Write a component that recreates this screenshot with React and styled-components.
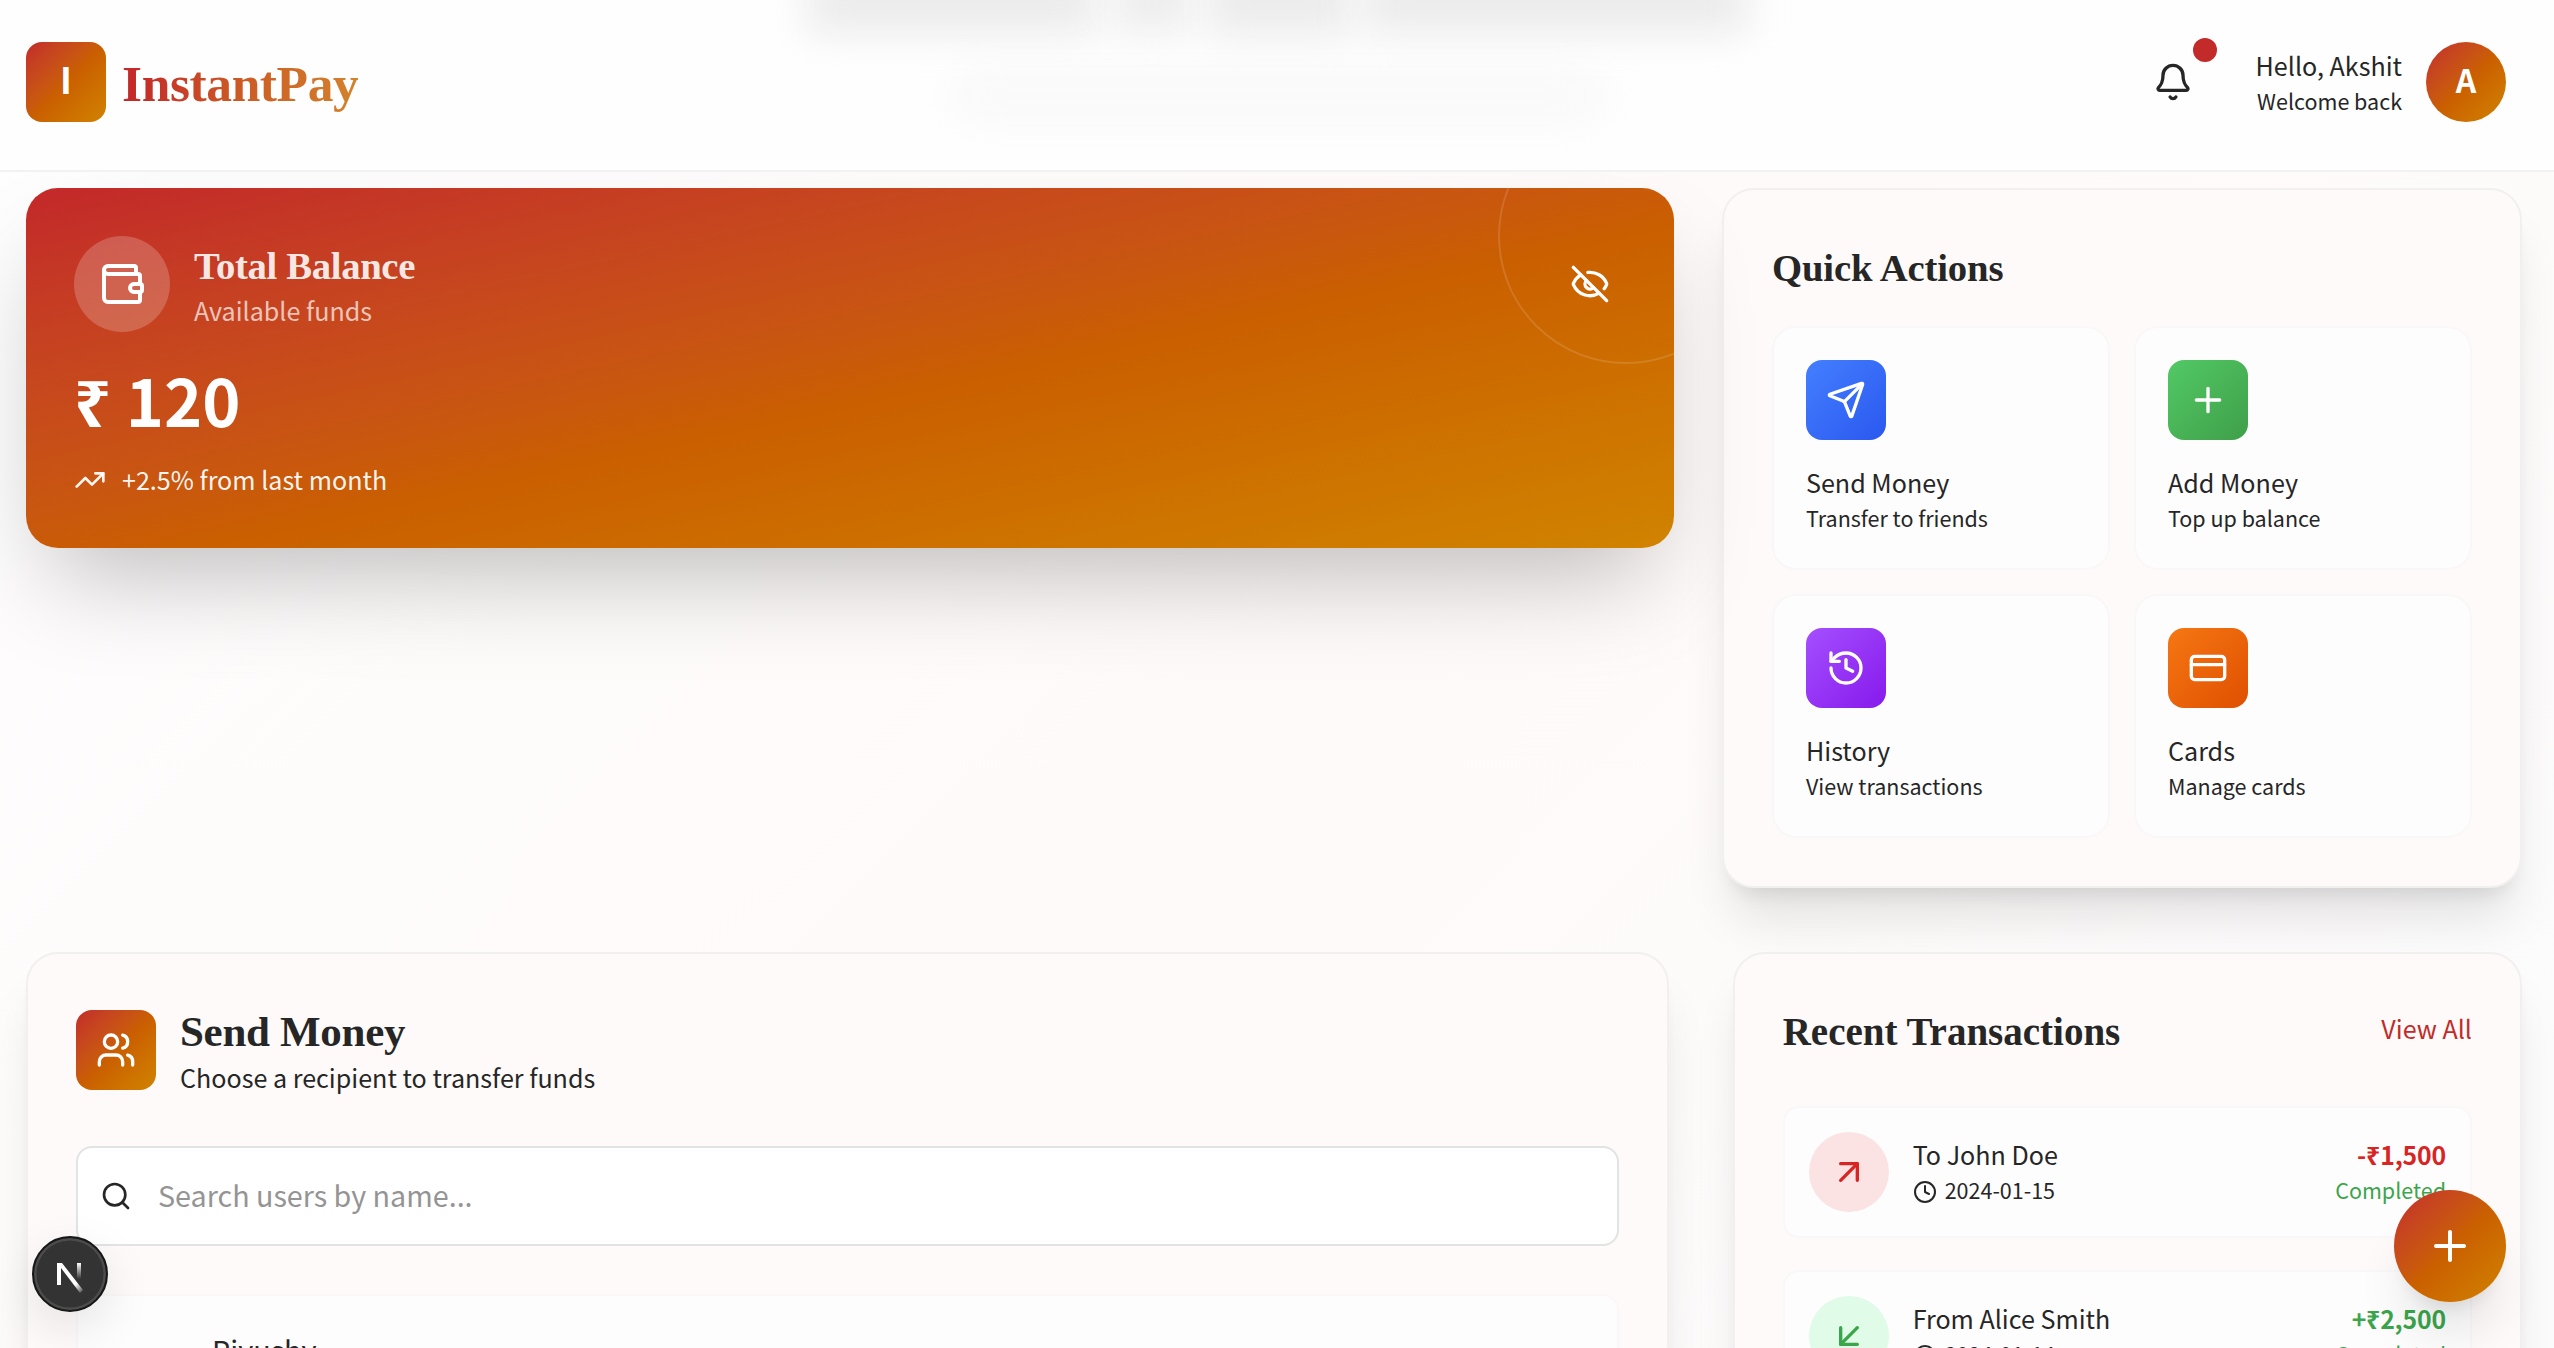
import React from 'react';
import styled, { createGlobalStyle } from 'styled-components';
import {
  ArrowDownLeft,
  ArrowUpRight,
  Bell,
  Clock,
  CreditCard,
  EyeOff,
  History,
  Plus,
  Search,
  Send,
  TrendingUp,
  Users,
  Wallet,
} from 'lucide-react';

const sans = '"Noto Sans CJK SC", "Noto Sans", sans-serif';
const serif = '"Liberation Serif", serif';
const brand = 'linear-gradient(to bottom right in oklab, #c32a29 0%, #ca5f00 51%, #d08300 100%)';
const brandWide = 'linear-gradient(to bottom right in oklab, #c32a29 2%, #ca5f00 55%, #d08300 100%)';
const ink = '#262626';
const shadowXl = '0 40px 50px -10px rgba(0, 0, 0, 0.1), 0 16px 20px -12px rgba(0, 0, 0, 0.1)';

const GlobalStyle = createGlobalStyle`
  *, *::before, *::after { box-sizing: border-box; }
  html, body { margin: 0; padding: 0; overflow: hidden; }
  body { font-family: ${sans}; color: ${ink}; }
  h1, h2, h3, p { margin: 0; font-weight: 400; }
  button { border: 0; background: none; padding: 0; color: inherit; font: inherit; }
  svg { display: block; flex: none; }
`;

const Page = styled.div`
  display: flex;
  flex-direction: column;
  height: 1348px;
  overflow: hidden;
  background: linear-gradient(135deg, #fefefe 0%, #fefaf9 50%, #fcfcfc 100%);
`;

const Header = styled.header`
  position: relative;
  z-index: 2;
  flex: none;
  display: flex;
  justify-content: space-between;
  align-items: center;
  height: 172px;
  padding: 0 48px 6px 26px;
  overflow: hidden;
  background: #fefefe;
  border-bottom: 2px solid #f2f2f2;
`;

const Haze = styled.span`
  position: absolute;
  left: ${(p) => p.$x}px;
  top: ${(p) => p.$y}px;
  width: ${(p) => p.$w}px;
  height: ${(p) => p.$h}px;
  border-radius: 12px;
  background: ${(p) => p.$tone};
  filter: blur(${(p) => p.$blur}px);
`;

const Brand = styled.div`
  position: relative;
  display: flex;
  align-items: center;
  gap: 16px;
`;

const BrandMark = styled.div`
  display: flex;
  align-items: center;
  justify-content: center;
  width: 80px;
  height: 80px;
  padding-bottom: 8px;
  border-radius: 16px;
  background: ${brand};
  color: #fff;
  font-size: 36px;
  font-weight: 700;
  line-height: 1;
`;

const BrandName = styled.h1`
  padding-top: 4px;
  font-family: ${serif};
  font-size: 51.5px;
  font-weight: 700;
  line-height: 64px;
  letter-spacing: -0.4px;
  background: linear-gradient(to right, #c32a29 5%, #cc5a24 50%, #d3832c 100%);
  background-clip: text;
  -webkit-background-clip: text;
  color: transparent;
`;

const Account = styled.div`
  position: relative;
  display: flex;
  align-items: center;
`;

const BellButton = styled.button`
  position: relative;
  padding: 16px;
  margin-right: 47px;
`;

const Dot = styled.span`
  position: absolute;
  top: -8px;
  right: -8px;
  width: 24px;
  height: 24px;
  border-radius: 50%;
  background: #c22b29;
`;

const Greeting = styled.div`
  padding-bottom: 3px;
  margin-right: 24px;
  text-align: right;
`;

const Avatar = styled(BrandMark)`
  border-radius: 50%;
  padding-bottom: 6px;
  font-size: 32px;
`;

const Label = styled.p`
  font-size: 25.1px;
  line-height: ${(p) => p.$lh || 40}px;
  color: ${(p) => p.$color || ink};
  white-space: nowrap;
`;

const Small = styled.p`
  font-size: 21.5px;
  line-height: 32px;
  color: ${(p) => p.$color || ink};
  white-space: nowrap;
`;

const Main = styled.main`
  flex: none;
  display: flex;
  flex-direction: column;
  gap: 64px;
  padding: 16px 32px 0 26px;
`;

const Columns = styled.div`
  display: grid;
  grid-template-columns: repeat(3, minmax(0, 1fr));
  gap: ${(p) => p.$gap}px;
  align-items: start;
  > :first-child { grid-column: span 2; }
`;

const BalanceCard = styled.section`
  position: relative;
  height: 360px;
  padding: 48px;
  border-radius: 32px;
  background: ${brandWide};
  color: #fff;
  box-shadow: 0 50px 100px -24px rgba(0, 0, 0, 0.25);
`;

const RingClip = styled.div`
  position: absolute;
  inset: 0;
  overflow: hidden;
  border-radius: 32px;
  &::after {
    content: '';
    position: absolute;
    top: -80px;
    right: -80px;
    width: 256px;
    height: 256px;
    border: 2px solid rgba(255, 255, 255, 0.13);
    border-radius: 50%;
  }
`;

const BalanceTop = styled.div`
  display: flex;
  align-items: center;
  justify-content: space-between;
  padding-right: 16px;
`;

const IconRow = styled.div`
  display: flex;
  align-items: center;
  gap: 24px;
`;

const WalletCircle = styled.div`
  display: flex;
  align-items: center;
  justify-content: center;
  width: 96px;
  height: 96px;
  border-radius: 50%;
  background: rgba(255, 255, 255, 0.2);
`;

const TitleStack = styled.div`
  padding-top: ${(p) => p.$push}px;
`;

const Heading = styled.h2`
  font-family: ${serif};
  font-size: ${(p) => p.$size}px;
  font-weight: 700;
  line-height: ${(p) => p.$lh}px;
  letter-spacing: ${(p) => p.$track || 0}px;
  color: ${(p) => p.$color || ink};
  white-space: nowrap;
`;

const Amount = styled.div`
  height: 128px;
  padding-top: 5px;
  font-size: 64.8px;
  font-weight: 700;
  line-height: 125px;
`;

const Trend = styled.div`
  display: flex;
  align-items: center;
  gap: 16px;
  height: 40px;
  color: rgba(255, 255, 255, 0.95);
  p { padding-bottom: 3px; }
`;

const Panel = styled.section`
  height: ${(p) => p.$height}px;
  padding: 48px;
  border: 2px solid #f2f0ef;
  border-radius: 32px;
  background: #fefaf9;
  box-shadow: ${shadowXl};
`;

const ActionGrid = styled.div`
  display: grid;
  grid-template-columns: 1fr 1fr;
  gap: 24px;
  margin-top: 28px;
`;

const ActionTile = styled.button`
  display: flex;
  flex-direction: column;
  align-items: flex-start;
  height: 244px;
  padding: 32px;
  border: 2px solid #f9f7f8;
  border-radius: 24px;
  background: #fefdfe;
  text-align: left;
`;

const IconTile = styled.div`
  flex: none;
  display: flex;
  align-items: center;
  justify-content: center;
  width: 80px;
  height: 80px;
  margin-bottom: ${(p) => p.$below || 0}px;
  border-radius: 16px;
  background: ${(p) => p.$fill};
  color: #fff;
`;

const PanelHead = styled.div`
  display: flex;
  align-items: center;
  gap: 24px;
  height: 96px;
  margin-bottom: 48px;
`;

const SearchBox = styled.label`
  display: flex;
  align-items: center;
  gap: 26px;
  height: 100px;
  padding: 0 22px;
  border: 2px solid #e2e3e3;
  border-radius: 16px;
  background: #fff;
`;

const SearchInput = styled.input`
  flex: 1;
  height: 96px;
  padding: 0 0 4px;
  border: 0;
  outline: 0;
  background: transparent;
  font-family: ${sans};
  font-size: 28.7px;
  color: ${ink};
  &::placeholder { color: #949494; opacity: 1; }
`;

const UserRow = styled.div`
  height: 148px;
  margin-top: 48px;
  padding: 30px 32px 0 134px;
  border: 2px solid #f9f7f8;
  border-radius: 16px;
  background: #fefdfe;
  font-size: 28.8px;
  line-height: 48px;
`;

const RecentHead = styled.div`
  display: flex;
  align-items: center;
  justify-content: space-between;
  height: 56px;
  margin-bottom: 48px;
  h2 { padding-top: 4px; }
  p { padding-bottom: 4px; }
`;

const TransactionList = styled.div`
  display: flex;
  flex-direction: column;
  gap: 32px;
`;

const Transaction = styled.div`
  display: flex;
  align-items: center;
  gap: 24px;
  height: 132px;
  padding: 0 24px;
  border: 2px solid #f9f7f8;
  border-radius: 16px;
  background: #fefdfe;
`;

const Direction = styled.div`
  display: flex;
  align-items: center;
  justify-content: center;
  width: 80px;
  height: 80px;
  border-radius: 50%;
  background: ${(p) => p.$bg};
  color: ${(p) => p.$color};
`;

const TxText = styled.div`
  flex: ${(p) => (p.$end ? 'none' : 1)};
  padding-bottom: 4px;
  text-align: ${(p) => (p.$end ? 'right' : 'left')};
`;

const TxDate = styled.div`
  display: flex;
  align-items: center;
  gap: 8px;
  height: 32px;
  svg { margin-top: 4px; }
`;

const TxAmount = styled.p`
  font-size: 24.8px;
  font-weight: 700;
  line-height: 40px;
  letter-spacing: -0.15px;
  color: ${(p) => p.$color};
`;

const FloatingAdd = styled.button`
  position: fixed;
  right: 48px;
  bottom: 46px;
  z-index: 3;
  display: flex;
  align-items: center;
  justify-content: center;
  width: 112px;
  height: 112px;
  border-radius: 50%;
  background: ${brand};
  color: #fff;
  box-shadow: ${shadowXl};
`;

const DevBadge = styled.div`
  position: fixed;
  left: 32px;
  bottom: 36px;
  z-index: 3;
  width: 76px;
  height: 76px;
  border: 2px solid #171717;
  border-radius: 50%;
  background: #333;
  box-shadow: inset 0 0 0 2.5px #4c4c4c, 0 16px 48px rgba(0, 0, 0, 0.1);
`;

const haze = [
  { x: 806, y: -34, w: 292, h: 68, tone: '#ececec', blur: 18 },
  { x: 1112, y: -34, w: 80, h: 66, tone: '#ededed', blur: 18 },
  { x: 1206, y: -34, w: 146, h: 70, tone: '#ececec', blur: 18 },
  { x: 1362, y: -34, w: 386, h: 68, tone: '#ececec', blur: 18 },
  { x: 955, y: 78, w: 646, h: 36, tone: '#f7f7f7', blur: 20 },
];

const actions = [
  { icon: Send, title: 'Send Money', note: 'Transfer to friends', from: '#447fff', to: '#2a58ef' },
  { icon: Plus, title: 'Add Money', note: 'Top up balance', from: '#52c965', to: '#3f9f49' },
  { icon: History, title: 'History', note: 'View transactions', from: '#a450ff', to: '#8719ec' },
  { icon: CreditCard, title: 'Cards', note: 'Manage cards', from: '#f67713', to: '#df5000' },
];

const transactions = [
  { name: 'To John Doe', date: '2024-01-15', amount: '-₹1,500', sent: true },
  { name: 'From Alice Smith', date: '2024-01-14', amount: '+₹2,500', sent: false },
];

function NMark() {
  return (
    <svg width="72" height="72" viewBox="0 0 72 72" fill="none">
      <defs>
        <linearGradient id="diag" x1="36" y1="42" x2="48" y2="57" gradientUnits="userSpaceOnUse">
          <stop offset="0.35" stopColor="#fff" />
          <stop offset="1" stopColor="#fff" stopOpacity="0" />
        </linearGradient>
        <linearGradient id="stem" x1="45" y1="25" x2="45" y2="41" gradientUnits="userSpaceOnUse">
          <stop stopColor="#fff" />
          <stop offset="1" stopColor="#fff" stopOpacity="0" />
        </linearGradient>
      </defs>
      <path d="M23 25h5l21 27-3 3-19-25v17h-4z" fill="url(#diag)" />
      <path d="M43 25h4v17h-4z" fill="url(#stem)" />
    </svg>
  );
}

export default function App() {
  return (
    <Page>
      <GlobalStyle />
      <Header>
        {haze.map((h) => (
          <Haze key={h.x} $x={h.x} $y={h.y} $w={h.w} $h={h.h} $tone={h.tone} $blur={h.blur} />
        ))}
        <Brand>
          <BrandMark>I</BrandMark>
          <BrandName>InstantPay</BrandName>
        </Brand>
        <Account>
          <BellButton aria-label="Notifications">
            <Bell size={40} />
            <Dot />
          </BellButton>
          <Greeting>
            <Label>Hello, Akshit</Label>
            <Small>Welcome back</Small>
          </Greeting>
          <Avatar>A</Avatar>
        </Account>
      </Header>

      <Main>
        <Columns $gap={48}>
          <BalanceCard>
            <RingClip />
            <BalanceTop>
              <IconRow>
                <WalletCircle>
                  <Wallet size={48} />
                </WalletCircle>
                <TitleStack $push={2}>
                  <Heading $size={38.7} $lh={50} $track={-0.33} $color="rgba(255,255,255,0.9)">
                    Total Balance
                  </Heading>
                  <Label $lh={38} $color="rgba(255,255,255,0.7)">Available funds</Label>
                </TitleStack>
              </IconRow>
              <EyeOff size={40} />
            </BalanceTop>
            <Amount>₹ 120</Amount>
            <Trend>
              <TrendingUp size={32} />
              <Label $color="inherit">+2.5% from last month</Label>
            </Trend>
          </BalanceCard>

          <Panel $height={700}>
            <Heading $size={38.7} $lh={60} $track={-0.15}>Quick Actions</Heading>
            <ActionGrid>
              {actions.map(({ icon: Icon, title, note, from, to }) => (
                <ActionTile key={title}>
                  <IconTile $below={22} $fill={`linear-gradient(to bottom right, ${from}, ${to})`}>
                    <Icon size={40} />
                  </IconTile>
                  <Label>{title}</Label>
                  <Small>{note}</Small>
                </ActionTile>
              ))}
            </ActionGrid>
          </Panel>
        </Columns>

        <Columns $gap={64}>
          <Panel $height={900}>
            <PanelHead>
              <IconTile $fill={brand}>
                <Users size={40} />
              </IconTile>
              <TitleStack $push={3}>
                <Heading $size={43} $lh={50} $track={-0.3}>Send Money</Heading>
                <Label>Choose a recipient to transfer funds</Label>
              </TitleStack>
            </PanelHead>
            <SearchBox>
              <Search size={32} />
              <SearchInput placeholder="Search users by name..." />
            </SearchBox>
            <UserRow>Piyushy</UserRow>
          </Panel>

          <Panel $height={900}>
            <RecentHead>
              <Heading $size={39} $lh={52}>Recent Transactions</Heading>
              <Label $color="#c22b29">View All</Label>
            </RecentHead>
            <TransactionList>
              {transactions.map((t) => (
                <Transaction key={t.name}>
                  <Direction $bg={t.sent ? '#fbe3e4' : '#e0fbe7'} $color={t.sent ? '#d82422' : '#3ba54b'}>
                    {t.sent ? <ArrowUpRight size={40} /> : <ArrowDownLeft size={40} />}
                  </Direction>
                  <TxText>
                    <Label>{t.name}</Label>
                    <TxDate>
                      <Clock size={24} />
                      <Small>{t.date}</Small>
                    </TxDate>
                  </TxText>
                  <TxText $end>
                    <TxAmount $color={t.sent ? '#d82422' : '#3ba54b'}>{t.amount}</TxAmount>
                    <Small $color="#3ba54b">Completed</Small>
                  </TxText>
                </Transaction>
              ))}
            </TransactionList>
          </Panel>
        </Columns>
      </Main>

      <DevBadge>
        <NMark />
      </DevBadge>
      <FloatingAdd aria-label="Add">
        <Plus size={48} />
      </FloatingAdd>
    </Page>
  );
}
